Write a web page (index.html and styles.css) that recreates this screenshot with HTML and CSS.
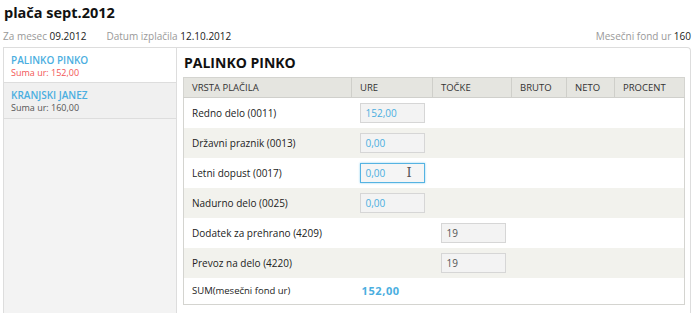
FILE: index.html
```html
<!DOCTYPE html>
<html>
<head>
<meta charset="utf-8">
<link rel="stylesheet" href="styles.css">
</head>
<body>
<div class="page">
  <h1 class="title">plača sept.2012</h1>
  <div class="info">
    <span class="info-item"><span class="lbl">Za mesec</span> <b>09.2012</b></span>
    <span class="info-item"><span class="lbl">Datum izplačila</span> <b>12.10.2012</b></span>
    <span class="info-item right"><span class="lbl">Mesečni fond ur</span> <b>160</b></span>
  </div>
  <div class="box">
    <div class="side">
      <div class="person active">
        <div class="pname">PALINKO PINKO</div>
        <div class="psum red">Suma ur: 152,00</div>
      </div>
      <div class="person">
        <div class="pname">KRANJSKI JANEZ</div>
        <div class="psum">Suma ur: 160,00</div>
      </div>
    </div>
    <div class="main">
      <h2 class="heading">PALINKO PINKO</h2>
      <table class="grid">
        <colgroup>
          <col class="c1"><col class="c2"><col class="c3"><col class="c4"><col class="c5"><col class="c6">
        </colgroup>
        <thead>
          <tr><th>VRSTA PLAČILA</th><th>URE</th><th>TOČKE</th><th>BRUTO</th><th>NETO</th><th>PROCENT</th></tr>
        </thead>
        <tbody>
          <tr><td>Redno delo (0011)</td><td><span class="inp">152,00</span></td><td></td><td></td><td></td><td></td></tr>
          <tr class="alt"><td>Državni praznik (0013)</td><td><span class="inp">0,00</span></td><td></td><td></td><td></td><td></td></tr>
          <tr><td>Letni dopust (0017)</td><td><span class="inp focus">0,00<span class="cursor">I</span></span></td><td></td><td></td><td></td><td></td></tr>
          <tr class="alt"><td>Nadurno delo (0025)</td><td><span class="inp">0,00</span></td><td></td><td></td><td></td><td></td></tr>
          <tr><td>Dodatek za prehrano (4209)</td><td></td><td><span class="inp gray">19</span></td><td></td><td></td><td></td></tr>
          <tr class="alt"><td>Prevoz na delo (4220)</td><td></td><td><span class="inp gray">19</span></td><td></td><td></td><td></td></tr>
          <tr class="sum"><td>SUM(mesečni fond ur)</td><td><span class="sumval">152,00</span></td><td></td><td></td><td></td><td></td></tr>
        </tbody>
      </table>
    </div>
  </div>
</div>
</body>
</html>
```

FILE: styles.css
```css
* { box-sizing: border-box; }
html, body { margin: 0; padding: 0; background: #fff; overflow: hidden; }
body { font-family: "Open Sans", "DejaVu Sans", sans-serif; color: #222; font-size: 10px; }
.page { padding: 0 9px 0 3px; }
.title { margin: 0; padding: 3px 0 0 1px; font-size: 14.5px; font-weight: 700; line-height: 20px; color: #111; }
.info { display: flex; align-items: center; height: 24px; padding-top: 1px; font-size: 10px; }
.info-item { margin-right: 20px; color: #222; }
.info-item b { font-weight: 400; color: #222; }
.info-item .lbl { color: #999; }
.info-item.right { margin-left: auto; margin-right: 0; }
.box { display: flex; border: 1px solid #ddd; border-bottom: none; border-radius: 0 4px 0 0; height: 266px; }
.side { width: 173px; flex: none; background: #f3f3f3; border-right: 1px solid #ddd; }
.person { height: 36px; padding: 6px 0 0 7px; border-bottom: 1px solid #ddd; background: #f0f0f0; }
.person.active { background: #fff; height: 35px; }
.pname { color: #4aaee0; font-weight: 600; font-size: 10px; line-height: 13px; }
.psum { color: #555; font-size: 9px; line-height: 12px; }
.psum.red { color: #f25555; }
.main { flex: 1; padding: 0 6px 0 6px; }
.heading { margin: 0; padding: 5px 0 0 1px; height: 29px; font-size: 14px; line-height: 20px; font-weight: 700; color: #111; }
.grid { border-collapse: collapse; table-layout: fixed; width: 501px; border: 1px solid #d4d4d0; }
.c1 { width: 168px; } .c2 { width: 81px; } .c3 { width: 79px; } .c4 { width: 55px; } .c5 { width: 48px; } .c6 { width: 70px; }
.grid th { height: 20px; padding: 0 0 0 8px; background: #e5e5e0; border-left: 1px solid #cfcfca; border-bottom: 1px solid #d0d0cc; text-align: left; font-weight: 400; font-size: 9.5px; color: #333; }
.grid th:first-child { border-left: none; }
.grid td { height: 30px; padding: 0 0 0 8px; font-size: 10px; color: #222; vertical-align: middle; }
.grid tr.alt td { background: #f2f2ed; }
.grid tr.sum td { height: 27px; font-size: 9.5px; }
.inp { display: flex; align-items: center; position: relative; width: 65px; height: 20px; padding-left: 5px; background: #f3f3f3; border: 1px solid #d6d6d6; color: #4aaee0; font-size: 10px; }
.inp.gray { color: #555; }
.inp.focus { border: 1px solid #55b3e2; box-shadow: 0 0 2px #8cd0f0; background: #f5f5f5; }
.cursor { position: absolute; left: 46px; top: 2px; font-family: "DejaVu Serif", serif; font-size: 13px; line-height: 14px; color: #555; }
.sumval { color: #4aaee0; font-weight: 700; font-size: 11px; letter-spacing: 0.6px; padding-left: 2px; }
```
